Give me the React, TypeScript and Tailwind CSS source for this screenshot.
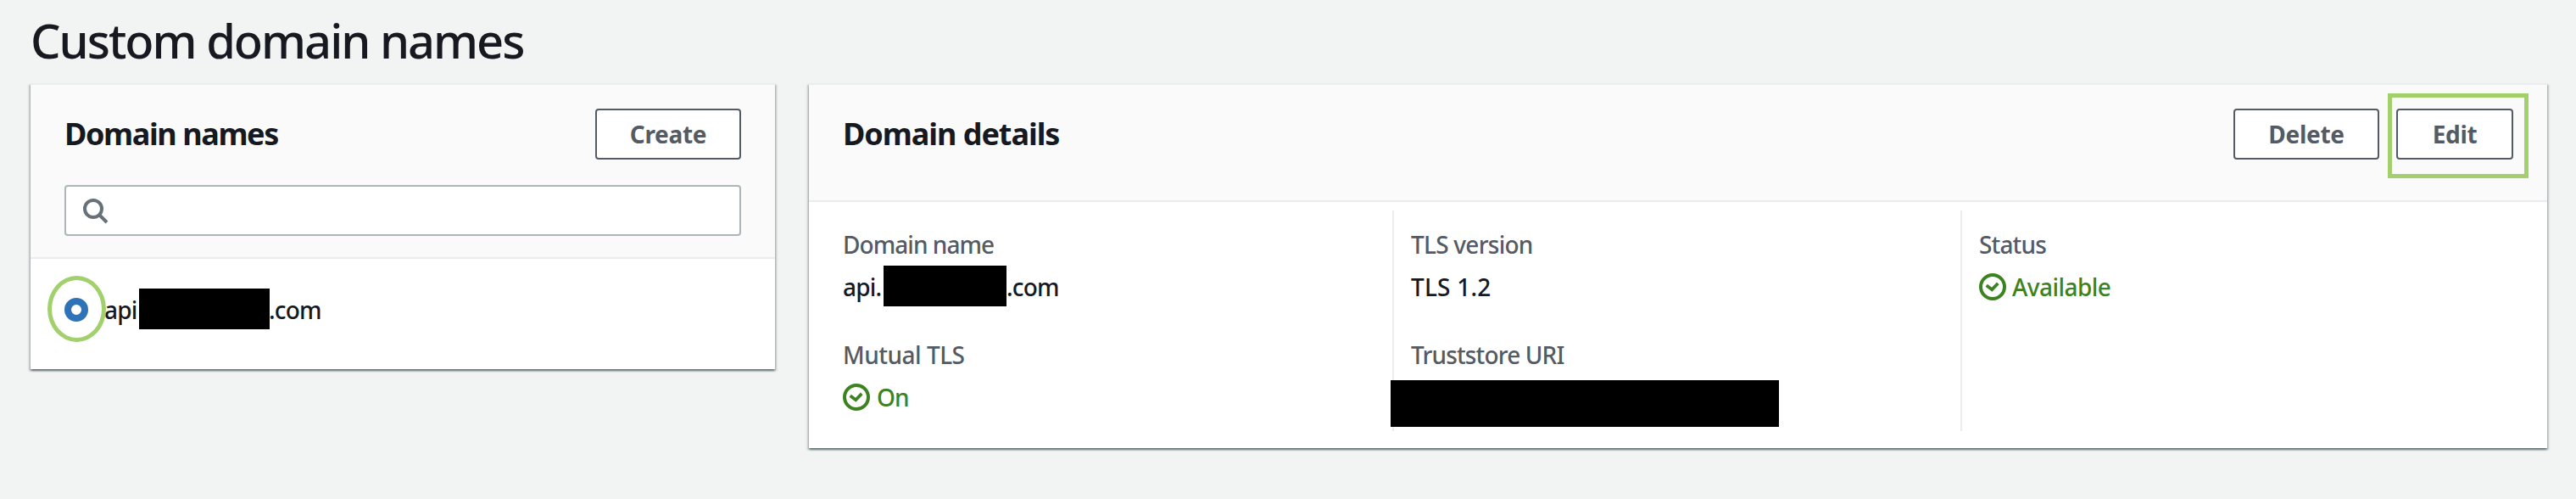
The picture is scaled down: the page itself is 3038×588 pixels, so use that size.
import type { ReactNode } from "react";

const PANEL =
  "border-t-2 border-[#eaeded] bg-white shadow-[0_2px_2px_0_rgba(0,28,36,0.4),2px_2px_2px_0_rgba(0,28,36,0.18),-2px_2px_2px_0_rgba(0,28,36,0.18)]";

function Button({ children, className }: { children: ReactNode; className: string }) {
  return (
    <button
      className={`flex h-[60px] items-center justify-center rounded border-2 border-[#545b64] bg-white text-[28px] font-bold tracking-[-0.3px] text-[#545b64] ${className}`}
    >
      {children}
    </button>
  );
}

function SearchIcon() {
  return (
    <svg className="size-8" viewBox="0 0 16 16" fill="none" stroke="#687078" strokeWidth="2">
      <circle cx="7" cy="7" r="5" />
      <path d="M15 15l-4.5-4.5" />
    </svg>
  );
}

function Success({ children, className }: { children: ReactNode; className: string }) {
  return (
    <div className="flex h-[50px] items-center text-[#3c8220]">
      <svg className="size-8" viewBox="0 0 32 32" fill="none" stroke="#3c8220">
        <circle cx="16" cy="16" r="14" strokeWidth="4" />
        <path d="M8.7 14.2l6.5 5 7.1-7.3" strokeWidth="3.7" />
      </svg>
      <span className={className}>{children}</span>
    </div>
  );
}

function Label({ children, className = "" }: { children: ReactNode; className?: string }) {
  return <div className={`text-[#545b64] ${className}`}>{children}</div>;
}

export default function App() {
  return (
    <main className="h-[588px] w-[3038px] overflow-hidden bg-[#f2f3f3] pl-9 font-['Noto_Sans',sans-serif] text-[28px] leading-[50px] font-[460] tracking-[-0.85px] whitespace-nowrap text-[#16191f]">
      <h1 className="h-[98px] text-[56px] leading-[94px] tracking-[-2px]">Custom domain names</h1>

      <div className="flex items-start gap-10">
        <section className={`w-[878px] ${PANEL}`}>
          <header className="h-[205px] border-b-2 border-[#eaeded] bg-[#fafafa] px-10 pt-7">
            <div className="flex items-center justify-between">
              <h2 className="text-[36px] font-bold tracking-[-1.4px]">Domain names</h2>
              <Button className="w-[172px]">Create</Button>
            </div>
            <div className="mt-[30px] flex h-[60px] items-center rounded border-2 border-[#aab7b8] bg-white pl-[18px]">
              <SearchIcon />
            </div>
          </header>
          <div className="flex h-[130px] items-center pb-[10px] pl-10">
            <div className="relative size-7 rounded-full border-8 border-[#2e73b8] bg-white">
              <div className="absolute -top-[34px] -left-[28px] h-[78px] w-[69px] rounded-[50%] border-[5px] border-[#a1d06c]" />
            </div>
            <span className="ml-[19px] w-[41px]">api</span>
            <span className="-mt-[2px] h-12 w-[154px] bg-black" />
            <span className="-ml-px">.com</span>
          </div>
        </section>

        <section className={`w-[2050px] ${PANEL}`}>
          <header className="flex h-[138px] items-start justify-between border-b-2 border-[#eaeded] bg-[#fafafa] px-10 pt-7">
            <h2 className="mt-[5px] text-[36px] font-bold tracking-[-1.05px]">Domain details</h2>
            <div className="flex gap-5">
              <Button className="w-[172px]">Delete</Button>
              <div className="relative">
                <Button className="w-[138px]">Edit</Button>
                <div className="absolute -top-[18px] -left-[10px] h-[100px] w-[166px] border-[5px] border-[#a1d06c]" />
              </div>
            </div>
          </header>
          <div className="flex h-[290px] pt-[10px] pb-5">
            <div className="w-[688px] pt-[15px] pl-10">
              <Label className="tracking-[-0.95px]">Domain name</Label>
              <div className="flex h-[50px]">
                <span className="w-12">api.</span>
                <span className="h-12 w-[145px] bg-black" />
                <span>.com</span>
              </div>
              <Label className="mt-[30px] tracking-[-0.5px]">Mutual TLS</Label>
              <Success className="ml-2">On</Success>
            </div>
            <div className="w-[670px] border-l-2 border-[#eaeded] pt-[15px] pl-5">
              <Label className="tracking-[-0.75px]">TLS version</Label>
              <div className="tracking-[0.2px]">TLS 1.2</div>
              <Label className="mt-[30px]">Truststore URI</Label>
              <div className="mt-[5px] -ml-6 h-[55px] w-[458px] bg-black" />
            </div>
            <div className="border-l-2 border-[#eaeded] pt-[15px] pl-5">
              <Label>Status</Label>
              <Success className="ml-[7px] tracking-[-0.55px]">Available</Success>
            </div>
          </div>
        </section>
      </div>
    </main>
  );
}
